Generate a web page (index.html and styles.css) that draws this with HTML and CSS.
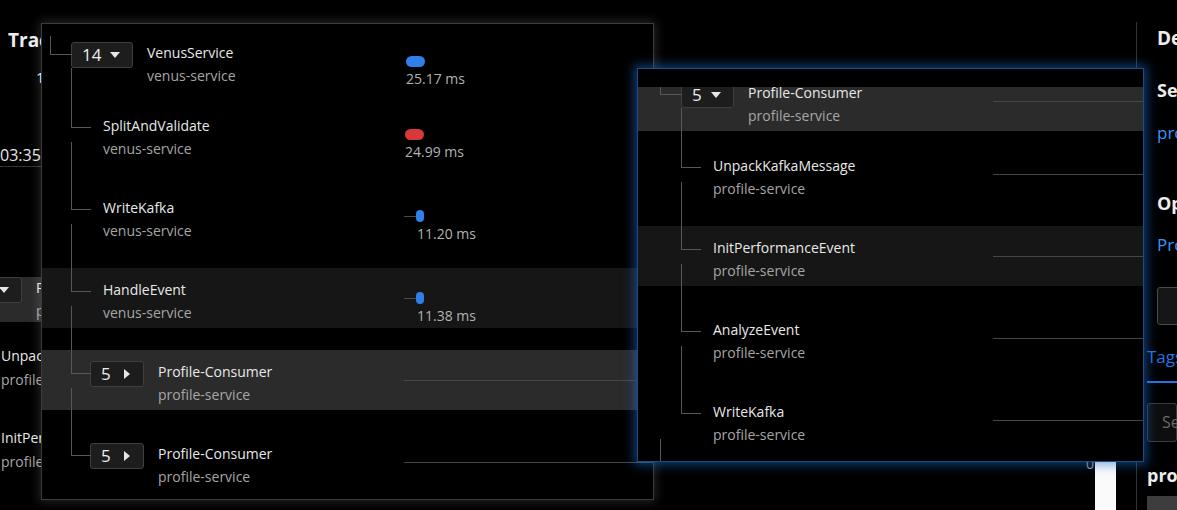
FILE: index.html
```html
<!DOCTYPE html>
<html>
<head>
<meta charset="utf-8">
<link rel="stylesheet" href="styles.css">
</head>
<body>
<div class="app">
  <div class="main">
    <div class="bg-title">Trace Details</div>
    <div class="bg-count">14 spans</div>
    <div class="bg-time">03:35:42.817</div>
    <div class="bg-row hl">
      <span class="toggle bg-toggle"><span class="num">5</span><svg class="tri" width="10" height="6" viewBox="0 0 10 6"><polygon points="0,0 10,0 5,6"/></svg></span>
      <div class="bg-names"><div class="name">Profile-Consumer</div><div class="svc">profile-service</div></div>
    </div>
    <div class="bg-item first"><div class="name">UnpackKafkaMessage</div><div class="svc gap4">profile-service</div></div>
    <div class="bg-item second"><div class="name">InitPerformanceEvent</div><div class="svc gap4">profile-service</div></div>
    <span class="bg-zero">0</span>
    <div class="bg-strip"></div>
  </div>
  <aside class="side">
    <div class="side-h d-title">Details</div>
    <div class="side-h s-service">Service</div>
    <div class="side-link l-service">profile-service</div>
    <div class="side-h s-op">Operation</div>
    <div class="side-link l-op">Profile-Consumer</div>
    <div class="side-btn">View logs</div>
    <div class="tabs"><span class="tab">Tags</span></div>
    <div class="search">Search tags</div>
    <div class="side-proc">process</div>
    <div class="side-block"></div>
  </aside>
</div>

<div class="panel p1">
  <div class="row lv0 root">
    <div class="node">
      <span class="toggle w62"><span class="num">14</span><svg class="tri" width="10" height="6" viewBox="0 0 10 6"><polygon points="0,0 10,0 5,6"/></svg></span>
      <div class="names"><div class="name">VenusService</div><div class="svc">venus-service</div></div>
    </div>
    <div class="tl">
      <div class="track"><span class="pill" style="margin-left:2px;width:19px"></span></div>
      <div class="dur" style="margin-left:2px">25.17 ms</div>
    </div>
  </div>
  <div class="row lv1 open-first">
    <div class="node"><div class="names"><div class="name">SplitAndValidate</div><div class="svc">venus-service</div></div></div>
    <div class="tl">
      <div class="track"><span class="pill red" style="margin-left:1px;width:19px"></span></div>
      <div class="dur" style="margin-left:1px">24.99 ms</div>
    </div>
  </div>
  <div class="row lv1">
    <div class="node"><div class="names"><div class="name">WriteKafka</div><div class="svc">venus-service</div></div></div>
    <div class="tl">
      <div class="track"><span class="lead" style="width:12px"></span><span class="pill small"></span></div>
      <div class="dur" style="margin-left:13px">11.20 ms</div>
    </div>
  </div>
  <div class="row lv1 hl-dark">
    <div class="node"><div class="names"><div class="name">HandleEvent</div><div class="svc">venus-service</div></div></div>
    <div class="tl">
      <div class="track"><span class="lead" style="width:12px"></span><span class="pill small"></span></div>
      <div class="dur" style="margin-left:13px">11.38 ms</div>
    </div>
  </div>
  <div class="row lv1 hl">
    <div class="node">
      <span class="toggle w54"><span class="num">5</span><svg class="tri-r" width="10" height="10" viewBox="0 0 10 10"><polygon points="2,0 8,5 2,10"/></svg></span>
      <div class="names"><div class="name">Profile-Consumer</div><div class="svc">profile-service</div></div>
    </div>
    <div class="tl"><div class="track"><span class="span-line"></span></div></div>
  </div>
  <div class="row lv1">
    <div class="node">
      <span class="toggle w54"><span class="num">5</span><svg class="tri-r" width="10" height="10" viewBox="0 0 10 10"><polygon points="2,0 8,5 2,10"/></svg></span>
      <div class="names"><div class="name">Profile-Consumer</div><div class="svc">profile-service</div></div>
    </div>
    <div class="tl"><div class="track"><span class="span-line"></span></div></div>
  </div>
</div>

<div class="panel p2">
  <div class="p2-head"></div>
  <div class="tree">
    <div class="row lv0 hl top">
      <div class="node">
        <span class="toggle w53"><span class="num">5</span><svg class="tri" width="10" height="6" viewBox="0 0 10 6"><polygon points="0,0 10,0 5,6"/></svg></span>
        <div class="names"><div class="name">Profile-Consumer</div><div class="svc">profile-service</div></div>
      </div>
      <div class="tl"><div class="track"><span class="span-line"></span></div></div>
    </div>
    <div class="row lv1 open-first">
      <div class="node"><div class="names"><div class="name">UnpackKafkaMessage</div><div class="svc">profile-service</div></div></div>
      <div class="tl"><div class="track"><span class="span-line"></span></div></div>
    </div>
    <div class="row lv1 hl-dark">
      <div class="node"><div class="names"><div class="name">InitPerformanceEvent</div><div class="svc">profile-service</div></div></div>
      <div class="tl"><div class="track"><span class="span-line"></span></div></div>
    </div>
    <div class="row lv1">
      <div class="node"><div class="names"><div class="name">AnalyzeEvent</div><div class="svc">profile-service</div></div></div>
      <div class="tl"><div class="track"><span class="span-line"></span></div></div>
    </div>
    <div class="row lv1">
      <div class="node"><div class="names"><div class="name">WriteKafka</div><div class="svc">profile-service</div></div></div>
      <div class="tl"><div class="track"><span class="span-line"></span></div></div>
    </div>
    <div class="row lv0 tail">
      <div class="node">
        <span class="toggle w53"><span class="num">5</span><svg class="tri-r" width="10" height="10" viewBox="0 0 10 10"><polygon points="2,0 8,5 2,10"/></svg></span>
        <div class="names"><div class="name">Profile-Consumer</div><div class="svc">profile-service</div></div>
      </div>
      <div class="tl"><div class="track"><span class="span-line"></span></div></div>
    </div>
  </div>
</div>
</body>
</html>
```

FILE: styles.css
```css
* { box-sizing: border-box; }
html, body { margin: 0; padding: 0; background: #000; }
body {
  width: 1177px;
  height: 510px;
  overflow: hidden;
  position: relative;
  font-family: "Open Sans", "Noto Sans", sans-serif;
  color: #e6e6e6;
}

.app { display: flex; height: 510px; }

/* ---------- background page ---------- */
.main { width: 1136px; flex: none; position: relative; overflow: hidden; white-space: nowrap; }
.bg-title { margin: 28px 0 0 8px; font-size: 19px; font-weight: 700; line-height: 24px; color: #ececec; }
.bg-count { margin: 15px 0 0 36px; font-size: 15px; line-height: 20px; }
.bg-time { margin-top: 57px; width: 320px; font-size: 16px; line-height: 22px; border-bottom: 1px solid #333; }
.bg-row { margin-top: 110px; height: 45px; display: flex; align-items: flex-start; }
.bg-row.hl { background: #2b2b2b; }
.bg-toggle { margin-left: -40px; width: 62px; height: 22px; margin-top: 0 !important; justify-content: flex-end; padding-right: 12px; }
.bg-names { margin-left: 14px; padding-top: 1px; }
.bg-item { padding-left: 1px; }
.bg-item.first { margin-top: 24px; }
.bg-item.second { margin-top: 38px; }
.gap4 { margin-top: 4px !important; }
.bg-zero { position: absolute; left: 1086px; top: 454px; font-size: 14px; color: #9a9a9a; }
.bg-strip { position: absolute; left: 1095px; top: 462px; width: 21px; height: 48px; background: #fafafa; }

/* ---------- side panel ---------- */
.side {
  flex: 1;
  margin-top: 22px;
  border-left: 1px solid #343434;
  padding-left: 10px;
  overflow: hidden;
  white-space: nowrap;
}
.side-h { padding-left: 10px; font-weight: 700; font-size: 18px; line-height: 24px; color: #ececec; }
.d-title { margin-top: 4px; font-size: 19px; }
.s-service { margin-top: 28px; }
.s-op { margin-top: 47px; }
.side-link { padding-left: 10px; font-size: 17px; line-height: 22px; color: #3794ff; }
.l-service { margin-top: 20px; }
.l-op { margin-top: 19px; }
.side-btn {
  margin: 31px 0 0 10px;
  height: 38px;
  padding: 0 14px 0 28px;
  line-height: 36px;
  font-size: 15px;
  color: #ddd;
  background: #161616;
  border: 1px solid #4a4a4a;
  border-radius: 3px;
}
.tabs { margin-top: 21px; }
.tab {
  display: inline-block;
  font-size: 17px;
  line-height: 22px;
  padding-bottom: 13px;
  color: #1f78e6;
  border-bottom: 2px solid #1f78e6;
  width: 60px;
}
.search {
  margin-top: 20px;
  height: 39px;
  padding-left: 14px;
  line-height: 37px;
  font-size: 16px;
  color: #6a6a6a;
  background: #0e0e0e;
  border: 1px solid #3a3a3a;
  border-radius: 3px;
}
.side-proc { margin-top: 22px; font-size: 18px; font-weight: 700; line-height: 22px; color: #ececec; }
.side-block { margin-top: 10px; height: 40px; background: #3d3d3d; }

/* ---------- floating trace panels ---------- */
.panel { position: absolute; background: #000; overflow: hidden; white-space: nowrap; }
.p1 {
  left: 41px;
  top: 23px;
  width: 613px;
  height: 477px;
  padding-top: 7px;
  border: 1px solid #3c3c3c;
  box-shadow: 0 0 10px 2px rgba(255, 255, 255, 0.14);
  --base: 8px;
  --node: 362px;
}
.p2 {
  left: 637px;
  top: 68px;
  width: 507px;
  height: 394px;
  display: flex;
  flex-direction: column;
  border: 1px solid #1c4c84;
  box-shadow: 0 0 10px 3px rgba(30, 110, 210, 0.55);
  --base: 22px;
  --node: 355px;
}
.p2-head { height: 18px; flex: none; background: #000; }
.p2 .tree { flex: 1; overflow: hidden; }

.row { position: relative; height: 60px; display: flex; margin-top: 22px; }
.row::before {
  content: "";
  position: absolute;
  top: -44px;
  height: 67px;
  border-left: 1px solid #575757;
  border-bottom: 1px solid #575757;
}
.row.root { margin-top: 0; }
.row.root::before { top: 5px; height: 18px; }
.row.top { margin-top: -16px; }
.row.open-first { margin-top: 13px; }
.row.open-first::before { top: -36px; height: 59px; }
.row.tail::before { top: -33px; height: 56px; }

.row.hl { background: #2b2b2b; }
.row.hl-dark { background: #161616; }

.lv0::before { left: var(--base); width: 21px; }
.lv0 .node { padding-left: calc(var(--base) + 21px); }
.lv1::before { left: calc(var(--base) + 21px); width: 19px; }
.lv1 .node { padding-left: calc(var(--base) + 40px); }

.node { flex: none; width: var(--node); display: flex; align-items: flex-start; }

.toggle {
  flex: none;
  display: flex;
  align-items: center;
  margin-top: 11px;
  height: 26px;
  padding-left: 10px;
  background: #1d1d1d;
  border: 1px solid #3f3f3f;
  border-radius: 3px;
  font-size: 17px;
  color: #ececec;
}
.toggle .num { line-height: 20px; }
.toggle .tri { margin-left: 9px; fill: #e6e6e6; }
.toggle .tri-r { margin-left: 11px; fill: #e6e6e6; }
.w62 { width: 62px; }
.w54 { width: 54px; }
.w53 { width: 53px; }

.names { margin-left: 13px; padding-top: 12px; }
.toggle + .names { margin-left: 14px; }
.name { font-size: 14px; line-height: 20px; color: #e8e8e8; }
.svc { margin-top: 3px; font-size: 14px; line-height: 20px; color: #a6a6a6; }

.tl { flex: 1; padding-top: 24px; }
.track { height: 12px; display: flex; align-items: center; }
.pill { flex: none; height: 11px; border-radius: 6px; background: #2f7fe9; }
.pill.red { background: #d7393a; }
.pill.small { width: 8px; height: 12px; border-radius: 4px; }
.lead { flex: none; height: 1px; background: #4a4a4a; }
.span-line { flex: 1; height: 1px; background: #464646; }
.dur { margin-top: 2px; font-size: 14px; line-height: 20px; color: #b3b3b3; }
```
